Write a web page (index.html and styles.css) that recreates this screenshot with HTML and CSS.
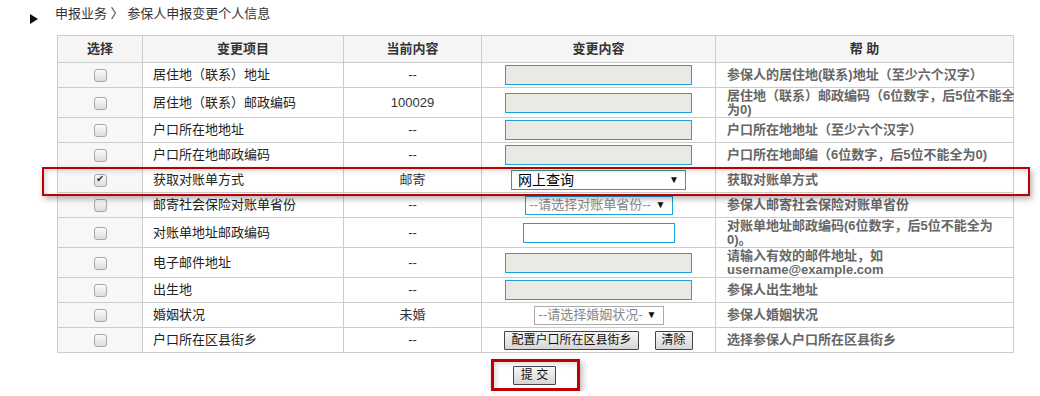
FILE: index.html
```html
<!DOCTYPE html>
<html lang="zh-CN">
<head>
    <meta charset="UTF-8">
    <title>参保人申报变更个人信息</title>
    <link rel="stylesheet" href="styles.css">
</head>
<body>
    <div class="crumb">
        <span class="arrow"></span>
        <span>申报业务 〉 参保人申报变更个人信息</span>
    </div>

    <div class="sheet">
        <table class="grid">
            <colgroup>
                <col style="width:85px">
                <col style="width:201px">
                <col style="width:138px">
                <col style="width:234px">
                <col style="width:298px">
            </colgroup>
            <tr class="head">
                <th>选择</th>
                <th>变更项目</th>
                <th>当前内容</th>
                <th>变更内容</th>
                <th>帮 助</th>
            </tr>
            <tr>
                <td class="pick"><input type="checkbox"></td>
                <td class="item">居住地（联系）地址</td>
                <td class="cur">--</td>
                <td class="chg"><input type="text" class="txt"></td>
                <td class="help">参保人的居住地(联系)地址（至少六个汉字）</td>
            </tr>
            <tr class="tall">
                <td class="pick"><input type="checkbox"></td>
                <td class="item">居住地（联系）邮政编码</td>
                <td class="cur">100029</td>
                <td class="chg"><input type="text" class="txt"></td>
                <td class="help">居住地（联系）邮政编码（6位数字，后5位不能全<br>为0)</td>
            </tr>
            <tr>
                <td class="pick"><input type="checkbox"></td>
                <td class="item">户口所在地地址</td>
                <td class="cur">--</td>
                <td class="chg"><input type="text" class="txt"></td>
                <td class="help">户口所在地地址（至少六个汉字）</td>
            </tr>
            <tr>
                <td class="pick"><input type="checkbox"></td>
                <td class="item">户口所在地邮政编码</td>
                <td class="cur">--</td>
                <td class="chg"><input type="text" class="txt"></td>
                <td class="help">户口所在地邮编（6位数字，后5位不能全为0)</td>
            </tr>
            <tr>
                <td class="pick"><input type="checkbox" checked></td>
                <td class="item">获取对账单方式</td>
                <td class="cur">邮寄</td>
                <td class="chg"><span class="sel sel-on">网上查询<i>▼</i></span></td>
                <td class="help">获取对账单方式</td>
            </tr>
            <tr>
                <td class="pick"><input type="checkbox"></td>
                <td class="item">邮寄社会保险对账单省份</td>
                <td class="cur">--</td>
                <td class="chg"><span class="sel sel-prov">--请选择对账单省份--<i>▼</i></span></td>
                <td class="help">参保人邮寄社会保险对账单省份</td>
            </tr>
            <tr class="tall">
                <td class="pick"><input type="checkbox"></td>
                <td class="item">对账单地址邮政编码</td>
                <td class="cur">--</td>
                <td class="chg"><input type="text" class="txt txt-white"></td>
                <td class="help">对账单地址邮政编码(6位数字，后5位不能全为<br>0)。</td>
            </tr>
            <tr class="tall">
                <td class="pick"><input type="checkbox"></td>
                <td class="item">电子邮件地址</td>
                <td class="cur">--</td>
                <td class="chg"><input type="text" class="txt"></td>
                <td class="help">请输入有效的邮件地址，如<br>username@example.com</td>
            </tr>
            <tr>
                <td class="pick"><input type="checkbox"></td>
                <td class="item">出生地</td>
                <td class="cur">--</td>
                <td class="chg"><input type="text" class="txt"></td>
                <td class="help">参保人出生地址</td>
            </tr>
            <tr>
                <td class="pick"><input type="checkbox"></td>
                <td class="item">婚姻状况</td>
                <td class="cur">未婚</td>
                <td class="chg"><span class="sel sel-marry">--请选择婚姻状况-<i>▼</i></span></td>
                <td class="help">参保人婚姻状况</td>
            </tr>
            <tr>
                <td class="pick"><input type="checkbox"></td>
                <td class="item">户口所在区县街乡</td>
                <td class="cur">--</td>
                <td class="chg">
                    <div class="btns">
                        <button type="button" class="btn">配置户口所在区县街乡</button>
                        <button type="button" class="btn">清除</button>
                    </div>
                </td>
                <td class="help">选择参保人户口所在区县街乡</td>
            </tr>
        </table>

        <!-- highlight round the edited row -->
        <div class="mark"></div>

        <div class="actions">
            <span class="submit-box"><button type="button" class="btn btn-submit">提 交</button></span>
        </div>
    </div>
</body>
</html>
```

FILE: styles.css
```css
body { margin: 0; background: #fff; color: #333; font-family: "Liberation Sans", "Noto Sans CJK SC", sans-serif; font-size: 13px; }

.crumb { display: flex; align-items: flex-start; padding: 6px 0 0 30px; height: 35px; box-sizing: border-box; line-height: 16px; }
.arrow { width: 0; height: 0; border-left: 8px solid #111; border-top: 5px solid transparent; border-bottom: 5px solid transparent; margin: 8px 17px 0 0; }

.sheet { position: relative; margin-left: 57px; width: 957px; }

.grid { border-collapse: collapse; width: 957px; table-layout: fixed; }
.grid th, .grid td { border: 1px solid #ccc; padding: 0; line-height: 14px; }
.grid tr { height: 25px; }
.grid tr.head { height: 27px; }
.grid tr.tall { height: 30px; }
.grid th { background: #f5f5f5; font-weight: bold; color: #333; text-align: center; }

.pick { background: #f7f7f7; text-align: center; }
.pick input { appearance: none; -webkit-appearance: none; width: 13px; height: 13px; margin: 0; vertical-align: middle; border: 1px solid #a8a8a8; border-radius: 3px; background: linear-gradient(#fbfbfb, #dcdcdc); box-sizing: border-box; position: relative; }
.pick input:checked::after { content: "✔"; position: absolute; left: 1px; top: -2px; font-size: 10px; color: #333; }

.item { padding-left: 10px !important; color: #222; }
.cur { text-align: center; color: #333; }
.chg { text-align: center; }
.help { padding-left: 11px !important; color: #666; font-weight: bold; white-space: nowrap; }

.txt { width: 187px; height: 20px; box-sizing: border-box; border: 1px solid #1ea0da; background: #ebe9e3; margin: 0; vertical-align: middle; }
.txt-white { width: 152px; background: #fff; }

.sel { display: inline-flex; align-items: center; justify-content: space-between; box-sizing: border-box; height: 20px; border: 1px solid #1ea0da; background: #fff; padding: 0 6px 0 4px; vertical-align: middle; color: #888; }
.sel i { font-style: normal; font-size: 10px; color: #111; }
.sel-on { width: 175px; border-color: #3b9c88; color: #000; padding-left: 6px; font-size: 14px; }
.sel-prov { width: 148px; height: 19px; }
.sel-marry { width: 130px; height: 19px; border-color: #aaa; }

.btns { display: flex; justify-content: center; gap: 16px; }
.btn { font-family: "Liberation Sans", "Noto Sans CJK SC", sans-serif; font-size: 12px; height: 19px; line-height: 15px; padding: 0 6px; margin: 0; border: 1px solid #444; border-radius: 1px; background: linear-gradient(#f6f6f6, #d6d6d6); color: #111; }

.mark { position: absolute; left: -15px; top: 132px; width: 988px; height: 29px; box-sizing: border-box; border: 2px solid #c00000; box-shadow: 2px 3px 6px rgba(0, 0, 0, 0.3), inset 2px 2px 5px rgba(0, 0, 0, 0.15); pointer-events: none; }

.actions { text-align: center; padding-top: 6px; }
.submit-box { display: inline-block; border: 3px solid #c00000; padding: 4px 21px 3px 19px; box-shadow: 2px 3px 6px rgba(0, 0, 0, 0.3), inset 2px 2px 5px rgba(0, 0, 0, 0.15); }
.btn-submit { padding: 0 7px; }
```
